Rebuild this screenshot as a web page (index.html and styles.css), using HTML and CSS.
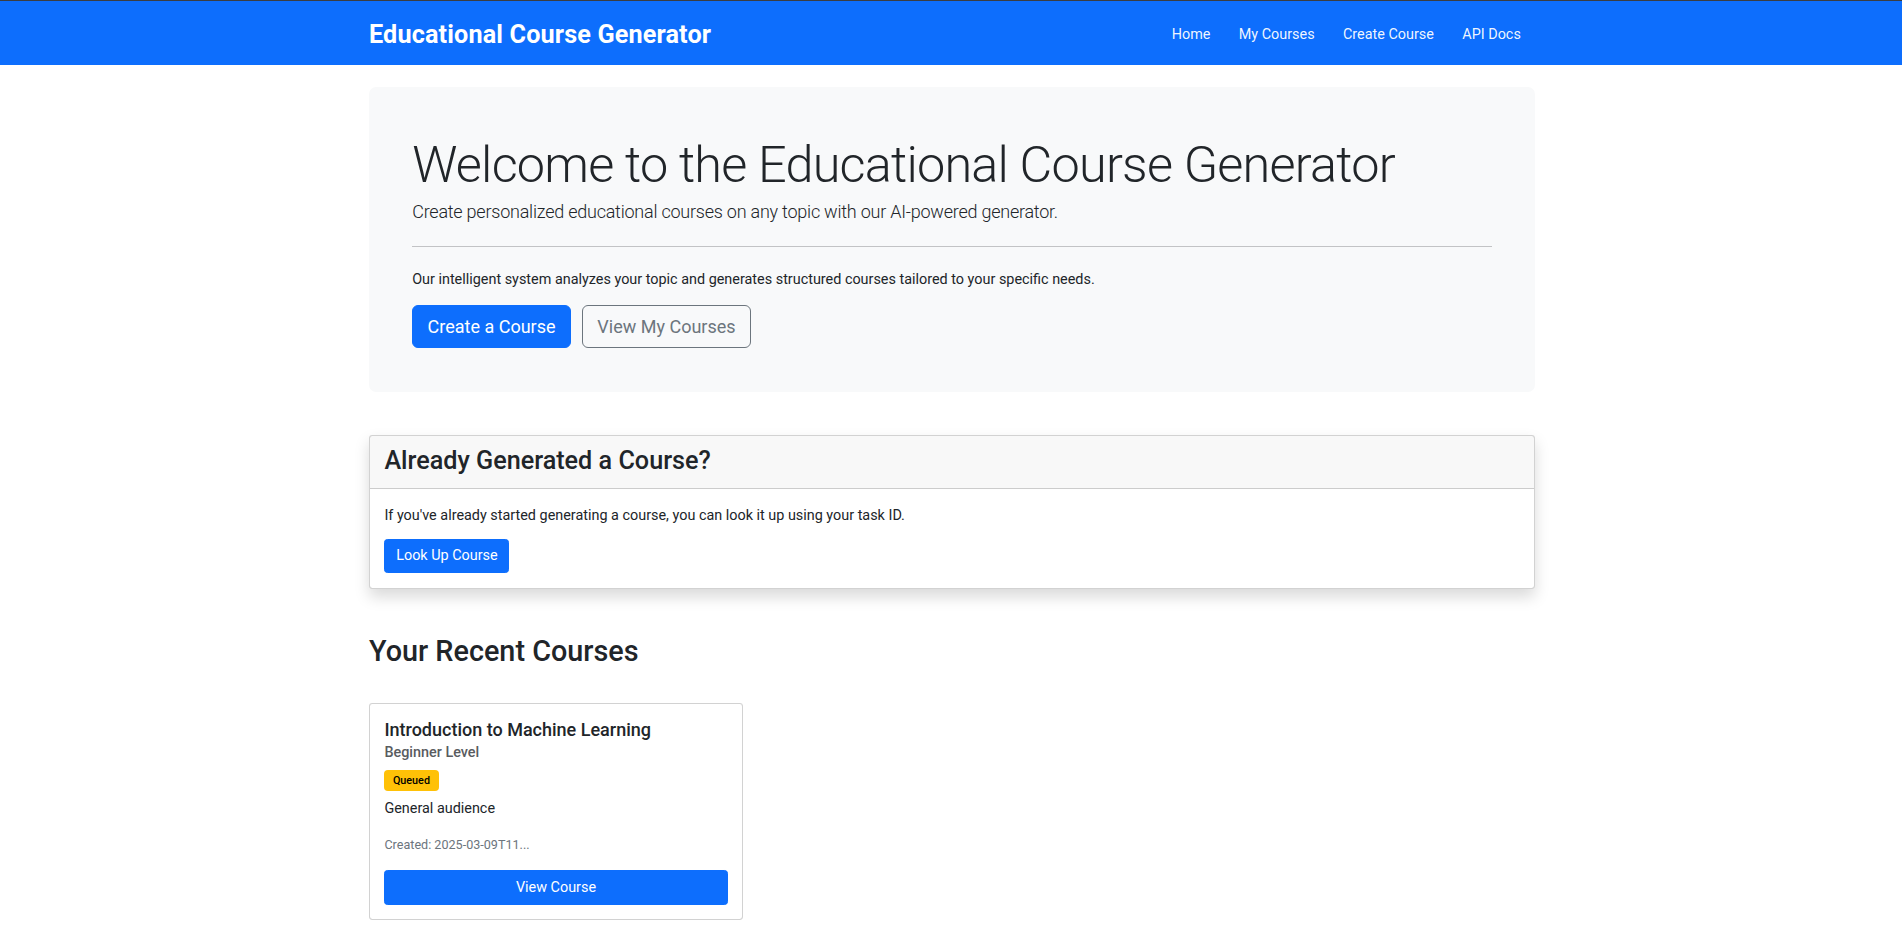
FILE: index.html
```html
<!DOCTYPE html>
<html lang="en">
<head>
<meta charset="utf-8">
<title>Educational Course Generator</title>
<link rel="stylesheet" href="styles.css">
</head>
<body>
<nav class="navbar">
  <div class="container nav-inner">
    <a class="brand" href="#">Educational Course Generator</a>
    <ul class="nav-links">
      <li><a class="nav-link" href="#">Home</a></li>
      <li><a class="nav-link" href="#">My Courses</a></li>
      <li><a class="nav-link" href="#">Create Course</a></li>
      <li><a class="nav-link" href="#">API Docs</a></li>
    </ul>
  </div>
</nav>

<main class="container">
  <section class="jumbotron">
    <h1 class="display">Welcome to the Educational Course Generator</h1>
    <p class="lead">Create personalized educational courses on any topic with our AI-powered generator.</p>
    <hr class="divider">
    <p class="text">Our intelligent system analyzes your topic and generates structured courses tailored to your specific needs.</p>
    <div class="btn-row">
      <a class="btn btn-lg btn-primary" href="#">Create a Course</a>
      <a class="btn btn-lg btn-outline" href="#">View My Courses</a>
    </div>
  </section>

  <section class="card card-shadow">
    <div class="card-header">
      <h3 class="card-header-title">Already Generated a Course?</h3>
    </div>
    <div class="card-body">
      <p class="text text-low">If you've already started generating a course, you can look it up using your task ID.</p>
      <a class="btn btn-primary" href="#">Look Up Course</a>
    </div>
  </section>

  <h2 class="section-title">Your Recent Courses</h2>

  <div class="course-grid">
    <div class="card course-card">
      <div class="card-body">
        <h5 class="course-title">Introduction to Machine Learning</h5>
        <h6 class="course-subtitle">Beginner Level</h6>
        <div class="badge-row"><span class="badge badge-warning">Queued</span></div>
        <p class="text">General audience</p>
        <p class="text"><small class="muted">Created: 2025-03-09T11...</small></p>
        <a class="btn btn-primary btn-block" href="#">View Course</a>
      </div>
    </div>
  </div>
</main>
</body>
</html>
```

FILE: styles.css
```css
* { box-sizing: border-box; }

html, body {
  margin: 0;
  padding: 0;
}

body {
  font-family: Roboto, "Liberation Sans", Arial, sans-serif;
  font-size: 14.4px;
  line-height: 1.5;
  color: #212529;
  background: #fff;
}

a { text-decoration: none; }

.container {
  width: 1166px;
  margin-left: calc(50% - 582px);
}

/* Navbar */
.navbar {
  background: #0d6efd;
  border-top: 1px solid #3a3d41;
  height: 65px;
}

.nav-inner {
  height: 64px;
  padding-top: 4px;
  display: flex;
  align-items: center;
  justify-content: space-between;
}

.brand {
  color: #fff;
  font-size: 25.2px;
  font-weight: 700;
  line-height: 1.2;
  letter-spacing: 0.15px;
}

.nav-links {
  list-style: none;
  display: flex;
  margin: 0;
  padding: 0;
}

.nav-link {
  display: block;
  padding: 7.2px 14.2px;
  color: rgba(255, 255, 255, 0.94);
  font-size: 14.4px;
}

/* Jumbotron */
.jumbotron {
  margin-top: 22px;
  margin-bottom: 43.2px;
  padding: 43.2px;
  background: #f8f9fa;
  border-radius: 7.2px;
}

.display {
  margin: 5px 0 2.2px;
  font-size: 50.4px;
  font-weight: 300;
  line-height: 1.2;
  letter-spacing: -0.78px;
}

.lead {
  margin: 0;
  font-size: 18px;
  font-weight: 300;
  line-height: 1.5;
  letter-spacing: -0.23px;
}

.divider {
  margin: 21.6px 0;
  border: 0;
  border-top: 1px solid #212529;
  opacity: 0.25;
  height: 0;
}

.text {
  margin: 0 0 14.4px;
}

.text-low {
  padding-top: 1.5px;
  margin-bottom: 12.9px;
}

.btn-row {
  display: flex;
  gap: 11px;
}

/* Buttons */
.btn {
  display: inline-block;
  padding: 5.4px 10.8px;
  font-size: 14.4px;
  line-height: 1.5;
  border: 1px solid transparent;
  border-radius: 3.4px;
  text-align: center;
}

.btn-lg {
  padding: 7.2px 14.4px;
  font-size: 18px;
  border-radius: 6px;
}

.btn-primary {
  background: #0d6efd;
  border-color: #0d6efd;
  color: #fff;
}

.btn-outline {
  background: transparent;
  border-color: #6c757d;
  color: #6c757d;
}

.btn-block {
  display: block;
  width: 100%;
}

/* Cards */
.card {
  background: #fff;
  border: 1px solid rgba(0, 0, 0, 0.175);
  border-radius: 3.4px;
}

.card-shadow {
  box-shadow: 0 7.2px 14.4px rgba(0, 0, 0, 0.15);
}

.card-header {
  padding: 10px 14.4px 4.4px;
  background: rgba(33, 37, 41, 0.03);
  border-bottom: 1px solid rgba(0, 0, 0, 0.175);
}

.card-header-title {
  margin: 0 0 7.2px;
  font-size: 25.2px;
  font-weight: 500;
  line-height: 1.2;
}

.card-body {
  padding: 14.4px;
}

.section-title {
  margin: 45px 0 35px;
  font-size: 28.8px;
  font-weight: 500;
  line-height: 1.2;
}

.course-grid {
  display: grid;
  grid-template-columns: 374px;
}

.course-title {
  margin: 0 0 7.2px;
  font-size: 18px;
  font-weight: 500;
  line-height: 1.2;
}

.course-subtitle {
  margin: -3.6px 0 7.2px;
  font-size: 14.4px;
  font-weight: 500;
  line-height: 1.2;
  color: #595c5f;
}

.badge-row {
  padding-top: 2px;
  margin: 0 0 7px;
  line-height: 21px;
}

.badge {
  display: inline-block;
  height: 21px;
  padding: 0 8.5px;
  font-size: 10.8px;
  font-weight: 500;
  line-height: 21px;
  border-radius: 4px;
  vertical-align: top;
}

.badge-warning {
  background: #ffc107;
  color: #000;
}

.muted {
  font-size: 12.6px;
  color: #6c757d;
}
```
